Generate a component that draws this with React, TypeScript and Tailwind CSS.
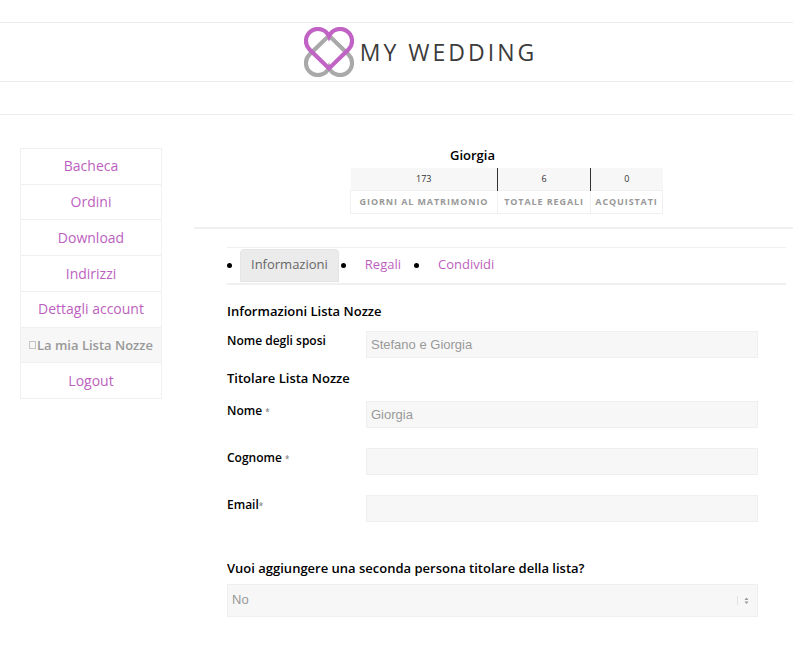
import { useState } from 'react';

const menuItems = ['Bacheca', 'Ordini', 'Download', 'Indirizzi', 'Dettagli account', 'La mia Lista Nozze', 'Logout'];
const tabs = ['Informazioni', 'Regali', 'Condividi'];

const people = [
  { id: 'nome', label: 'Nome ', value: 'Giorgia' },
  { id: 'cognome', label: 'Cognome ', value: '' },
  { id: 'email', label: 'Email', value: '' },
];

// Two overlapping hearts, the grey one upside down
function Logo() {
  return (
    <svg className="h-[50px] w-[50px]" viewBox="0 0 50 50" fill="none" strokeWidth="4.2">
      <path
        d="M25 40.7 A12 12 0 1 1 5.5 27.5 L25 8.6 L44.5 27.5 A12 12 0 1 1 25 40.7 Z"
        stroke="#a9a9a9"
      />
      <path
        d="M25 9.3 A12 12 0 1 0 5.5 22.5 L25 41.4 L44.5 22.5 A12 12 0 1 0 25 9.3 Z"
        stroke="#c163c4"
      />
    </svg>
  );
}

function Header() {
  return (
    <header>
      <div className="h-[22px]" />
      <a href="#" className="flex h-[60px] items-center justify-center gap-[6px] border-y border-[#ececec] pl-12">
        <Logo />
        <span className="text-[23px] leading-6 tracking-[3px] text-[#3c3c3c]">MY WEDDING</span>
      </a>
      <div className="h-[33px] border-b border-[#ececec]" />
    </header>
  );
}

function Sidebar() {
  return (
    <nav className="mt-[3px] w-[142px] shrink-0">
      <ul className="flex h-[251px] flex-col divide-y divide-[#f0f0f0] border border-[#f0f0f0] text-center text-sm">
        {menuItems.map((item) => (
          <li key={item} className="flex-1">
            {item === 'La mia Lista Nozze' ? (
              <a href="#" className="flex h-full items-center justify-center bg-[#f7f7f7] text-[13px] font-semibold whitespace-nowrap text-[#999]">
                <span className="mr-px h-2 w-[7px] border border-[#c4c4c4]" />
                {item}
              </a>
            ) : (
              <a href="#" className="flex h-full items-center justify-center text-[#bd5fc0]">
                {item}
              </a>
            )}
          </li>
        ))}
      </ul>
    </nav>
  );
}

function Summary() {
  return (
    <section className="flex flex-col items-center border-b-2 border-[#f0f0f0] pb-[13px]">
      <h2 className="mr-[42px] text-[13px] leading-5 font-semibold text-black">Giorgia</h2>
      <table className="mt-[3px] ml-[26px] text-center">
        <tbody>
          <tr className="h-[22px] bg-[#f7f7f7] text-[9px] text-[#333]">
            <td className="border-r border-[#333]">173</td>
            <td className="border-r border-[#333]">6</td>
            <td>0</td>
          </tr>
          <tr className="h-[23px] text-[9px] font-bold tracking-widest text-[#999]">
            <td className="w-[147px] border border-[#f0f0f0]">GIORNI AL MATRIMONIO</td>
            <td className="w-[93px] border border-[#f0f0f0]">TOTALE REGALI</td>
            <td className="w-[72px] border border-[#f0f0f0]">ACQUISTATI</td>
          </tr>
        </tbody>
      </table>
    </section>
  );
}

export default function App() {
  const [activeTab, setActiveTab] = useState('Informazioni');
  const [second, setSecond] = useState('No');

  const fieldClass = 'h-[27px] min-w-0 flex-1 border border-[#efefef] bg-[#f7f7f7] px-1 font-[Liberation_Sans,sans-serif] text-[13px] text-[#999] outline-none';
  const labelClass = 'w-[139px] shrink-0 text-xs leading-5 font-semibold';

  return (
    <div className="bg-white pr-[7px] font-[Open_Sans,sans-serif] text-black">
      <Header />
      <div className="flex pt-[30px] pl-5">
        <Sidebar />
        <main className="ml-8 min-w-0 flex-1">
          <Summary />

          <div className="pt-[18px] pr-[7px] pl-[33px]">
            <ul className="flex h-[38px] items-stretch gap-[2px] border-t border-b-2 border-[#f0f0f0] pt-px pb-px">
              {tabs.map((tab) => (
                <li key={tab} className="flex items-center gap-2">
                  <span className="h-[5px] w-[5px] rounded-full bg-black" />
                  <button
                    type="button"
                    onClick={() => setActiveTab(tab)}
                    className={
                      activeTab === tab
                        ? 'h-full rounded-t-sm border border-[#e4e4e4] bg-[#ebebeb] px-[10px] text-[13px] text-[#666]'
                        : 'h-full px-[11px] text-[13px] text-[#bd5fc0]'
                    }
                  >
                    {tab}
                  </button>
                </li>
              ))}
            </ul>

            <form className="pt-4 pr-7">
              <h3 className="text-[13px] leading-5 font-semibold">Informazioni Lista Nozze</h3>
              <div className="mt-[10px] flex">
                <label htmlFor="sposi" className={labelClass}>Nome degli sposi</label>
                <input id="sposi" type="text" defaultValue="Stefano e Giorgia" className={fieldClass} />
              </div>

              <h3 className="mt-[10px] text-[13px] leading-5 font-semibold">Titolare Lista Nozze</h3>
              <div className="mt-[13px] flex flex-col gap-5">
                {people.map((p) => (
                  <div key={p.id} className="flex">
                    <label htmlFor={p.id} className={labelClass}>
                      {p.label}
                      <span className="text-[8px] text-[#888]">*</span>
                    </label>
                    <input id={p.id} type="text" defaultValue={p.value} className={fieldClass} />
                  </div>
                ))}
              </div>

              <label htmlFor="seconda" className="mt-9 block text-[13px] leading-5 font-semibold">
                Vuoi aggiungere una seconda persona titolare della lista?
              </label>
              <div className="relative mt-[6px]">
                <select
                  id="seconda"
                  value={second}
                  onChange={(e) => setSecond(e.target.value)}
                  className="block h-[33px] w-full appearance-none border border-[#efefef] bg-[#f7f7f7] px-1 font-[Liberation_Sans,sans-serif] text-[13px] text-[#999] outline-none"
                >
                  <option>No</option>
                  <option>Sì</option>
                </select>
                <svg className="pointer-events-none absolute top-3 right-[7px] h-[9px] w-[14px]" viewBox="0 0 14 9">
                  <path d="M0.5 0V9" stroke="#e2e2e2" />
                  <path d="M7.5 4L9.5 1.5L11.5 4ZM7.5 5.5L9.5 8L11.5 5.5Z" fill="#999" />
                </svg>
              </div>
            </form>
          </div>
        </main>
      </div>
    </div>
  );
}
